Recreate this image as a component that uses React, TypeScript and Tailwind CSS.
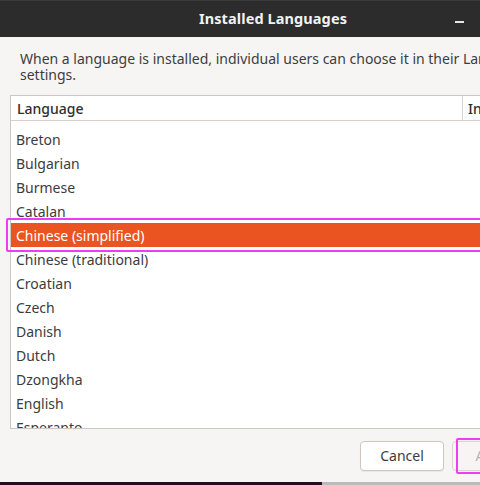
const languages = [
  "Breton",
  "Bulgarian",
  "Burmese",
  "Catalan",
  "Chinese (simplified)",
  "Chinese (traditional)",
  "Croatian",
  "Czech",
  "Danish",
  "Dutch",
  "Dzongkha",
  "English",
  "Esperanto",
];

const selected = "Chinese (simplified)";

export default function App() {
  return (
    <div
      className="relative w-[480px] h-[485px] overflow-hidden bg-[#f6f5f4] text-[#3c3c3c]"
      style={{ fontFamily: '"Noto Sans", "Open Sans", sans-serif' }}
    >
      <div className="w-[546px] flex flex-col">
        {/* header bar */}
        <div className="relative h-[37px] bg-[#2c2c2c] border-t border-[#3a3a3a] flex items-center justify-center">
          <span className="text-[14.5px] font-bold text-[#f2f2f2] tracking-[0.1px]">Installed Languages</span>
          <span className="absolute left-[455px] top-[20px] w-[9px] h-[2px] bg-[#e6e6e6]" />
        </div>

        <p className="mt-[14px] ml-[20px] whitespace-nowrap text-[14px] leading-[16px] text-[#3d3d3d]">
          When a language is installed, individual users can choose it in their Language
          <br />
          settings.
        </p>

        {/* language list */}
        <div className="mt-[12px] ml-[10px] h-[334px] bg-white border border-[#cdc7c2] overflow-hidden">
          <div className="flex h-[25px] border-b border-[#d6d1cd] text-[14px] font-medium text-[#2e2e2e]">
            <div className="w-[452px] pl-[6px] flex items-center border-r border-[#d6d1cd]">Language</div>
            <div className="pl-[5px] flex items-center">Installed</div>
          </div>
          <div className="pt-[6px]">
            {languages.map((name) => (
              <div
                key={name}
                className={
                  name === selected
                    ? "h-[24px] pl-[5px] flex items-center text-[14px] bg-[#e95420] text-white"
                    : "h-[24px] pl-[5px] flex items-center text-[14px] text-[#3c3c3c]"
                }
              >
                {name}
              </div>
            ))}
          </div>
        </div>

        {/* dialog buttons */}
        <div className="h-[53px] flex items-center gap-[8px] pl-[360px]">
          <button className="w-[84px] h-[30px] rounded-[4px] bg-white border border-[#cdc7c2] shadow-[0_1px_1px_rgba(0,0,0,0.06)] text-[14px] text-[#3c3c3c]">
            Cancel
          </button>
          <button className="w-[84px] h-[30px] rounded-[4px] bg-[#f6f5f4] border border-[#d9d4cf] text-[14px] text-[#b3b3b3]">
            Apply
          </button>
        </div>

        <div className="h-[3px] flex">
          <div className="w-[322px] bg-[#2c0a22]" />
          <div className="flex-1 bg-[#bdbbb9]" />
        </div>
      </div>

      {/* highlight frames */}
      <div className="absolute left-[6px] top-[218px] w-[480px] h-[34px] border-2 border-[#f03cf0] rounded-[2px]" />
      <div className="absolute left-[456px] top-[438px] w-[40px] h-[36px] border-2 border-[#f03cf0] rounded-[2px]" />
    </div>
  );
}
